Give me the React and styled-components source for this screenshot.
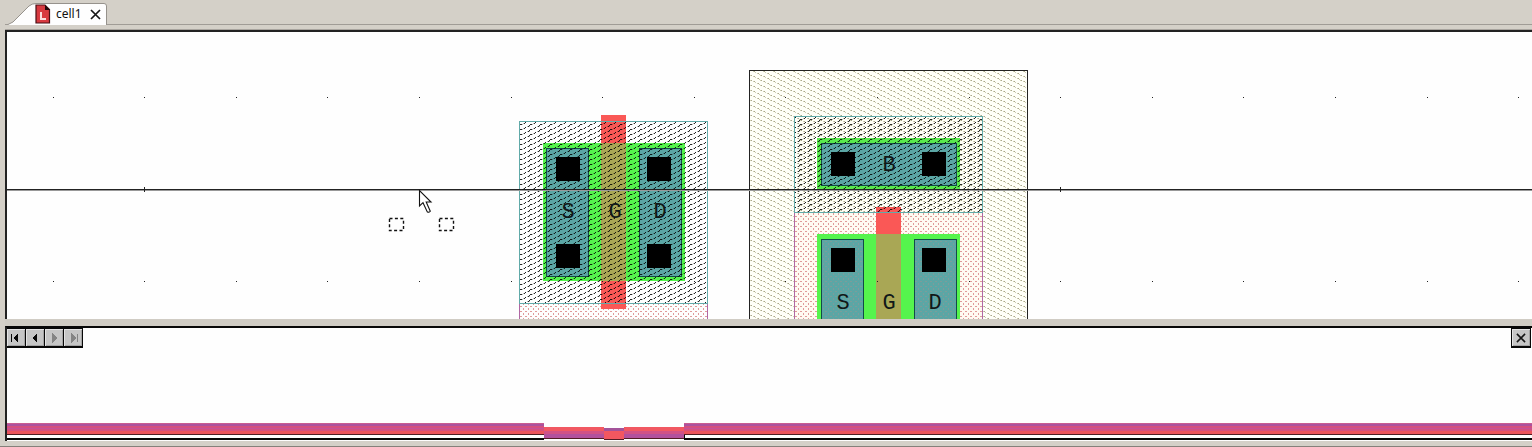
import React from "react";
import styled, { createGlobalStyle } from "styled-components";

const GlobalStyle = createGlobalStyle`
  * { box-sizing: border-box; }
  body { margin: 0; background: #d4d0c8; font-family: "Noto Sans", sans-serif; }
`;

const Window = styled.main`
  display: grid;
  grid-template-rows: 30px minmax(120px, 1fr) 127px;
  height: 100vh;
  padding-left: 5px;
  background: #d4d0c8;
  border-bottom: 1px solid #85817b;
`;

const TabBar = styled.nav`
  display: flex;
  align-items: flex-start;
  padding-top: 3px;
  height: 25px;
  border-bottom: 1px solid #a09c96;
`;

const Tab = styled.div`
  position: relative;
  display: flex;
  align-items: center;
  width: 104px;
  height: 22px;
  padding-left: 30px;
`;

const TabShape = styled.svg`
  position: absolute;
  inset: 0;
`;

const TabLabel = styled.button`
  position: relative;
  display: flex;
  align-items: center;
  gap: 5px;
  padding: 0;
  border: 0;
  background: none;
  color: #111;
  font: 12px/20px "Noto Sans", sans-serif;
`;

const TabClose = styled.button`
  position: relative;
  display: flex;
  margin-left: 8px;
  padding: 0;
  border: 0;
  background: none;
`;

const LayoutView = styled.section`
  overflow: hidden;
  min-height: 0;
  background: #fefefe;
  border-top: 2px solid #222;
  border-left: 2px solid #222;
  box-shadow: 0 -1px #a8a49e;
`;

const Drawing = styled.svg`
  display: block;
  width: 100%;
  height: 100%;
`;

const Label = styled.text`
  font: 22px "Liberation Mono", monospace;
  text-anchor: middle;
  fill: #101818;
`;

const SectionPane = styled.section`
  display: flex;
  flex-direction: column;
  border-top: 7px solid #d0ccc4;
`;

const SectionBody = styled.div`
  display: flex;
  flex: 1;
  flex-direction: column;
  justify-content: space-between;
  margin-bottom: 5px;
  border-top: 2px solid #080808;
  border-left: 2px solid #222;
  background: #fefefe;
`;

const SectionBar = styled.div`
  display: flex;
  justify-content: space-between;
  padding-right: 1px;
`;

const StepGroup = styled.div`
  display: flex;
`;

const ToolButton = styled.button`
  display: grid;
  place-items: center;
  width: ${(p) => (p.$joined ? "19px" : "20px")};
  height: 20px;
  padding: 0;
  border: 1px solid #080808;
  border-left-width: ${(p) => (p.$joined ? "0" : "1px")};
  border-bottom-width: 2px;
  background: #c6c6c6;
  box-shadow: inset 1px 1px #e4e4e4, inset -1px -1px #a4a4a4;
  color: ${(p) => (p.disabled ? "#848484" : "#080808")};
`;

const Profile = styled.svg`
  display: block;
  width: 100%;
  height: 19px;
`;

const EXTENT = 6000;
const gridColumns = Array.from({ length: 60 }, (_, i) => Math.floor(53 + i * 91.6));

function Cross({ size }) {
  return (
    <svg width={size} height={size} viewBox="0 0 11 11">
      <path d="M1 1L10 10M10 1L1 10" fill="none" stroke="#151515" strokeWidth="1.7" />
    </svg>
  );
}

function Patterns() {
  return (
    <defs>
      <pattern id="select" width="10" height="5" patternUnits="userSpaceOnUse">
        <path d="M2 4h1v1H2zM3 3h1v1H3zM5 2h1v1H5zM7 1h1v1H7zM9 1h1v1H9z" fill="#000" opacity=".25" />
        <path d="M0 4h2v1H0zM4 3h1v1H4zM5 2h1v1H5zM8 1h1v1H8zM9 0h1v1H9z" fill="#000" opacity=".85" />
      </pattern>
      <pattern id="well" width="10" height="5" patternUnits="userSpaceOnUse">
        <rect width="10" height="5" fill="#fffff8" />
        <path d="M0 0h2v1H0zM3 1h2v1H3zM5 2h1v1H5zM7 3h2v1H7zM9 4h1v1H9z" fill="#d0ceb4" />
        <path d="M1 0h1v1H1zM4 1h1v1H4zM8 3h1v1H8z" fill="#aaa88c" />
      </pattern>
      <pattern id="implant" width="5" height="5" patternUnits="userSpaceOnUse">
        <path d="M0 1h2v1H0zM3 3h1v2H3z" fill="#dd9090" opacity=".9" />
      </pattern>
      <pattern id="implantOverMetal" width="5" height="5" patternUnits="userSpaceOnUse">
        <path d="M0 1h2v1H0zM3 3h1v2H3z" fill="#8b9a96" opacity=".7" />
      </pattern>
    </defs>
  );
}

function Metal({ x, y, width, height, fill = "#5ba6a5" }) {
  return <rect x={x + 0.5} y={y + 0.5} width={width - 1} height={height - 1} fill={fill} stroke="#124b48" />;
}

function Contact({ x, y }) {
  return <rect x={x} y={y} width="24" height="24" fill="#000" />;
}

function CellLayout() {
  return (
    <Drawing role="img" aria-label="Transistor cell layout">
      <Patterns />
      <g transform="translate(-7 -32)" shapeRendering="crispEdges">
        <rect x="749.5" y="70.5" width="278" height={EXTENT} fill="url(#well)" stroke="#222" />

        <rect x="519.5" y="303.5" width="188" height={EXTENT} fill="url(#implant)" stroke="#b067a4" />
        <rect x="543" y="143" width="142" height="138" fill="#55f44d" />
        <rect x="601" y="115" width="25" height="194" fill="#fa5856" />
        <rect x="601" y="143" width="25" height="138" fill="#a9a755" />
        <Metal x={546} y={148} width={43} height={129} />
        <Metal x={639} y={148} width={43} height={129} />
        <rect x="519.5" y="121.5" width="188" height="182" fill="url(#select)" stroke="#61aaa9" />
        <Contact x={556} y={157} />
        <Contact x={556} y={244} />
        <Contact x={647} y={157} />
        <Contact x={647} y={244} />

        <rect x="817" y="138" width="143" height="51" fill="#59ea4e" />
        <Metal x={821} y={143} width={136} height={43} />
        <rect x="794.5" y="212.5" width="188" height={EXTENT} fill="#fffaf2" />
        <rect x="794.5" y="212.5" width="188" height={EXTENT} fill="url(#implant)" stroke="#b067a4" />
        <rect x="817" y="234" width="143" height={EXTENT} fill="#55f44d" />
        <rect x="876" y="207" width="25" height="27" fill="#fa5856" />
        <rect x="876" y="234" width="25" height={EXTENT} fill="#a9a755" />
        <Metal x={821} y={239} width={43} height={EXTENT} />
        <Metal x={914} y={239} width={43} height={EXTENT} />
        <Metal x={821} y={239} width={43} height={EXTENT} fill="url(#implantOverMetal)" />
        <Metal x={914} y={239} width={43} height={EXTENT} fill="url(#implantOverMetal)" />
        <rect x="794.5" y="116.5" width="188" height="96" fill="url(#select)" stroke="#61aaa9" />
        <Contact x={831} y={152} />
        <Contact x={922} y={152} />
        <Contact x={831} y={248} />
        <Contact x={922} y={248} />

        {gridColumns.map((x) => (
          <path key={x} d={`M${x} 97h1v1h-1zM${x} 281h1v1h-1z`} fill="#222" />
        ))}
        <rect x="0" y="189" width={EXTENT} height="1" fill="#222" />
        <rect x="0" y="190" width={EXTENT} height="1" fill="#999" />
        <path d="M144 187h1v5h-1zM1060 187h1v5h-1z" fill="#222" />
      </g>
      <g transform="translate(-7 -32)">
        <Label x="568" y="218">S</Label>
        <Label x="615" y="218">G</Label>
        <Label x="660" y="218">D</Label>
        <Label x="889" y="171">B</Label>
        <Label x="843" y="309">S</Label>
        <Label x="889" y="309">G</Label>
        <Label x="935" y="309">D</Label>
        <g fill="none" stroke="#111" strokeWidth="1.4" strokeDasharray="3 2.4">
          <rect x="389.5" y="218.5" width="14" height="12" />
          <rect x="439.5" y="218.5" width="14" height="12" />
        </g>
        <path d="M419.5 190.5V206L423 202.700L427.200 211.700Q429 213 430.300 211.200L426.200 202H431Z" fill="#fff" stroke="#111" strokeWidth="1.1" />
      </g>
    </Drawing>
  );
}

function Strata({ x, width }) {
  return (
    <g>
      <rect x={x} y="1" width={width} height="11" fill="#d4507e" />
      <rect x={x} y="1" width={width} height="1" fill="#c95c91" />
      <rect x={x} y="2" width={width} height="2" fill="#ac529e" />
      <rect x={x} y="6" width={width} height="1" fill="#c4519a" />
      <rect x={x} y="9" width={width} height="3" fill="#eb545b" />
      <rect x={x} y="12" width={width} height="1" fill="#511d22" />
      <rect x={x} y="16" width={width} height="2" fill="#080808" />
    </g>
  );
}

function ThinStrata({ x, width }) {
  return (
    <g>
      <rect x={x} y="5" width={width} height="4" fill="#f15862" />
      <rect x={x} y="9" width={width} height="3" fill="#d05286" />
      <rect x={x} y="12" width={width} height="4" fill="#b2519d" />
      <rect x={x} y="16" width={width} height="1" fill="#521c25" />
    </g>
  );
}

function StepIcon({ back, bar }) {
  return (
    <svg width="14" height="12" viewBox="0 0 14 12" fill="currentColor" shapeRendering="crispEdges">
      <g transform={back ? undefined : "translate(14 0) scale(-1 1)"}>
        <path d="M4 6L9 1V11Z" />
        {bar && <path d="M2 2h1v8H2z" />}
      </g>
    </svg>
  );
}

export default function App() {
  return (
    <>
      <GlobalStyle />
      <Window>
        <TabBar>
          <Tab>
            <TabShape width="104" height="22" viewBox="0 0 104 22">
              <path d="M2 22L8 19L24 3Q27 0.5 31 0.5H99Q101.500 .5 101.500 3V22" fill="#fefefe" stroke="#96928c" />
            </TabShape>
            <TabLabel type="button">
              <svg width="16" height="20" viewBox="0 0 16 20">
                <path d="M1 1H10L14.500 5.500V19H1Z" fill="#d83a40" stroke="#481015" strokeWidth="1.2" />
                <path d="M10 1V6H15Z" fill="#24090b" />
                <path d="M6 8V15H11" fill="none" stroke="#fbdede" strokeWidth="2" />
              </svg>
              cell1
            </TabLabel>
            <TabClose type="button" aria-label="Close cell1"><Cross size="11" /></TabClose>
          </Tab>
        </TabBar>
        <LayoutView><CellLayout /></LayoutView>
        <SectionPane>
          <SectionBody>
            <SectionBar>
              <StepGroup>
                <ToolButton type="button" $joined aria-label="First step"><StepIcon back bar /></ToolButton>
                <ToolButton type="button" $joined aria-label="Previous step"><StepIcon back /></ToolButton>
                <ToolButton type="button" $joined disabled aria-label="Next step"><StepIcon /></ToolButton>
                <ToolButton type="button" $joined disabled aria-label="Last step"><StepIcon bar /></ToolButton>
              </StepGroup>
              <ToolButton type="button" aria-label="Close cross section"><Cross size="10" /></ToolButton>
            </SectionBar>
            <Profile role="img" aria-label="Cross section" shapeRendering="crispEdges">
              <Strata x={0} width={537} />
              <ThinStrata x={537} width={60} />
              <rect x="597" y="6" width="20" height="3" fill="#a3539a" />
              <rect x="597" y="9" width="20" height="8" fill="#f25760" />
              <rect x="597" y="17" width="20" height="1" fill="#521c25" />
              <ThinStrata x={617} width={60} />
              <rect x="677" y="12" width="1" height="6" fill="#080808" />
              <Strata x={677} width={EXTENT} />
            </Profile>
          </SectionBody>
        </SectionPane>
      </Window>
    </>
  );
}
